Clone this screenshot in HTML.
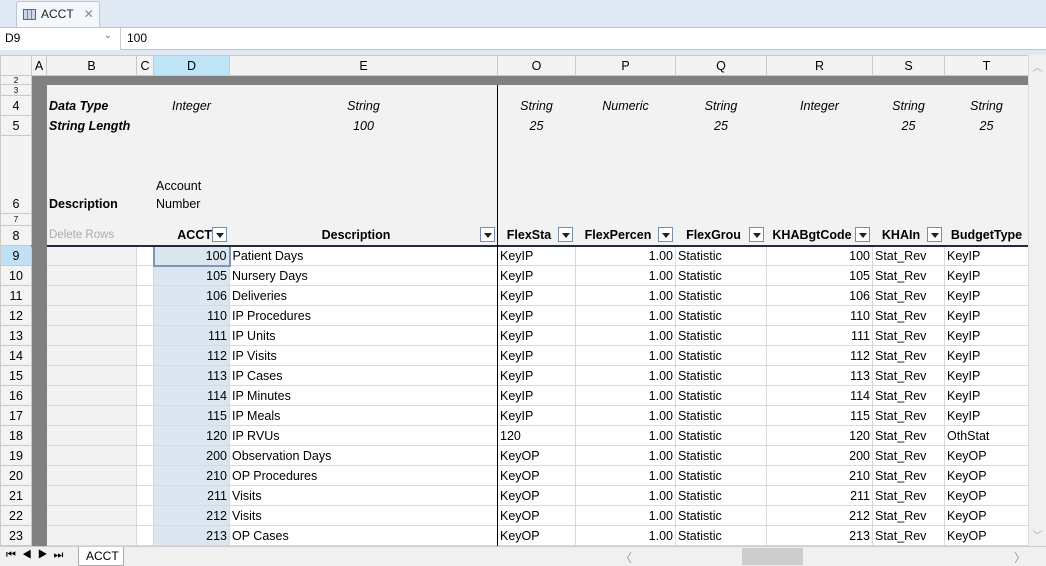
<!DOCTYPE html>
<html><head><meta charset="utf-8"><style>
*{box-sizing:border-box;margin:0;padding:0}
body{width:1046px;height:566px;overflow:hidden;background:#dfe8f3;font-family:"Liberation Sans",sans-serif;font-size:12.5px;color:#000;position:relative}
.tab{position:absolute;left:16px;top:1px;width:84px;height:26px;background:#f4f7fb;border:1px solid #b9c6d6;border-bottom:none;border-radius:3px 3px 0 0;font-size:12px;line-height:24px;padding-left:24px;color:#222}
.tab .ic{position:absolute;left:6px;top:7px;width:13px;height:11px;border:1px solid #4a6a9a;background:repeating-linear-gradient(90deg,#c8d6ea 0 3px,#6d88b3 3px 4px)}
.tab .x{color:#888;margin-left:10px}
.fb{position:absolute;left:0;top:27px;width:1046px;height:23px;background:#fff;border-top:1px solid #b9c6d6;border-bottom:1px solid #b9c6d6}
.nb{position:absolute;left:0;top:0;width:121px;height:22px;border-right:1px solid #ccc;background:#fff;padding:3px 5px;font-size:12px}
.nb span{position:absolute;right:8px;top:2px;color:#777;font-size:10px}
.fv{position:absolute;left:127px;top:3px;font-size:12px}
.grid{position:absolute;left:0;top:55px;width:1028px;height:491px;overflow:hidden;background:#fff}
table{border-collapse:collapse;table-layout:fixed;width:1028px}
td{overflow:hidden;white-space:nowrap;padding:0 2px;height:20px;border:1px solid #d9d9d9;line-height:18px}
.hd td{background:#f3f3f3;text-align:center;font-size:12.5px;border-color:#c9c9c9}
td.rh{background:#f3f3f3;text-align:center;border-color:#c9c9c9;font-size:12.5px}
tr.top td{background:#f2f2f2;border-color:#f2f2f2}
tr.top td.rh{border-color:#c9c9c9;background:#f3f3f3}
td.ga{background:#808080 !important;border-color:#808080 !important}
tr.band td{background:#808080;border-color:#808080}
tr.band td.rh{background:#f3f3f3;border-color:#c9c9c9}
tr.tiny td{height:0;font-size:8px;line-height:5px;padding-top:0;padding-bottom:0}
tr.tiny td.rh{height:auto}
.r{text-align:right}.c{text-align:center}.i{font-style:italic}.b{font-weight:bold}
td.B{background:#f2f2f2}
td.D{background:#dce6f1}
tr.r8 td{border-bottom:2px solid #1f2a3a}
tr.r8 td.rh{border-bottom:1px solid #c9c9c9}
.vl{position:absolute;left:497px;top:30px;width:1px;height:470px;background:#000}
.dd{display:inline-block;width:15px;height:15px;border:1px solid #7a8ca8;background:#fff;vertical-align:middle;position:relative;float:right;margin-top:1px}
.dd:after{content:"";position:absolute;left:3px;top:5px;border-left:4px solid transparent;border-right:4px solid transparent;border-top:5px solid #222}
.vs{position:absolute;left:1028px;top:55px;width:18px;height:491px;background:#f0f0f0;border-left:1px solid #ddd;color:#aaa;font-size:10px;text-align:center}
.bot{position:absolute;left:0;top:546px;width:1046px;height:20px;background:#f0f0f0;border-top:1px solid #ccc;font-size:12px}
</style></head><body>
<div class="tab"><div class="ic"></div>ACCT<span class="x">✕</span></div>
<div class="fb"><div class="nb">D9<span>⌄</span></div><div class="fv">100</div></div>
<div class="grid"><table>
<colgroup><col style="width:31px"><col style="width:15px"><col style="width:90px"><col style="width:17px"><col style="width:76px"><col style="width:268px"><col style="width:78px"><col style="width:100px"><col style="width:91px"><col style="width:106px"><col style="width:72px"><col style="width:84px"></colgroup>
<tr class="hd"><td></td><td>A</td><td>B</td><td>C</td><td style="background:#bfe3f7">D</td><td>E</td><td>O</td><td>P</td><td>Q</td><td>R</td><td>S</td><td>T</td></tr>
<tr class="band tiny" style="height:9px"><td class="rh" style="height:9px">2</td><td></td><td></td><td></td><td></td><td></td><td></td><td></td><td></td><td></td><td></td><td></td></tr>
<tr class="top tiny" style="height:11px"><td class="rh" style="height:11px">3</td><td class="ga"></td><td></td><td></td><td></td><td></td><td></td><td></td><td></td><td></td><td></td><td></td></tr>
<tr class="top"><td class="rh">4</td><td class="ga"></td><td class="b i" colspan="2">Data Type</td><td class="c i">Integer</td><td class="c i">String</td><td class="c i">String</td><td class="c i">Numeric</td><td class="c i">String</td><td class="c i">Integer</td><td class="c i">String</td><td class="c i">String</td></tr>
<tr class="top"><td class="rh">5</td><td class="ga"></td><td class="b i" colspan="2">String Length</td><td></td><td class="c i">100</td><td class="c i">25</td><td></td><td class="c i">25</td><td></td><td class="c i">25</td><td class="c i">25</td></tr>
<tr class="top"><td class="rh" style="height:78px;vertical-align:bottom">6</td><td class="ga"></td><td class="b" colspan="2" style="vertical-align:bottom">Description</td><td style="vertical-align:bottom;white-space:normal;line-height:18px">Account Number</td><td></td><td></td><td></td><td></td><td></td><td></td><td></td></tr>
<tr class="top tiny" style="height:12px"><td class="rh" style="height:12px">7</td><td class="ga"></td><td></td><td></td><td></td><td></td><td></td><td></td><td></td><td></td><td></td><td></td></tr>
<tr class="top r8"><td class="rh">8</td><td class="ga"></td><td style="color:#aaa;font-size:11.5px">Delete Rows</td><td></td><td class="b r">ACCT <span class="dd"></span></td><td class="b c">Description<span class="dd"></span></td><td class="b c">FlexSta<span class="dd"></span></td><td class="b c">FlexPercen<span class="dd"></span></td><td class="b c">FlexGrou<span class="dd"></span></td><td class="b c">KHABgtCode<span class="dd"></span></td><td class="b c">KHAIn<span class="dd"></span></td><td class="b c">BudgetType</td></tr>
<tr><td class="rh" style="background:#bfe0f5">9</td><td class="ga"></td><td class="B"></td><td></td><td class="D r" style="border:2px solid #7d96b8">100</td><td>Patient Days</td><td>KeyIP</td><td class="r">1.00</td><td>Statistic</td><td class="r">100</td><td>Stat_Rev</td><td>KeyIP</td></tr>
<tr><td class="rh">10</td><td class="ga"></td><td class="B"></td><td></td><td class="D r">105</td><td>Nursery Days</td><td>KeyIP</td><td class="r">1.00</td><td>Statistic</td><td class="r">105</td><td>Stat_Rev</td><td>KeyIP</td></tr>
<tr><td class="rh">11</td><td class="ga"></td><td class="B"></td><td></td><td class="D r">106</td><td>Deliveries</td><td>KeyIP</td><td class="r">1.00</td><td>Statistic</td><td class="r">106</td><td>Stat_Rev</td><td>KeyIP</td></tr>
<tr><td class="rh">12</td><td class="ga"></td><td class="B"></td><td></td><td class="D r">110</td><td>IP Procedures</td><td>KeyIP</td><td class="r">1.00</td><td>Statistic</td><td class="r">110</td><td>Stat_Rev</td><td>KeyIP</td></tr>
<tr><td class="rh">13</td><td class="ga"></td><td class="B"></td><td></td><td class="D r">111</td><td>IP Units</td><td>KeyIP</td><td class="r">1.00</td><td>Statistic</td><td class="r">111</td><td>Stat_Rev</td><td>KeyIP</td></tr>
<tr><td class="rh">14</td><td class="ga"></td><td class="B"></td><td></td><td class="D r">112</td><td>IP Visits</td><td>KeyIP</td><td class="r">1.00</td><td>Statistic</td><td class="r">112</td><td>Stat_Rev</td><td>KeyIP</td></tr>
<tr><td class="rh">15</td><td class="ga"></td><td class="B"></td><td></td><td class="D r">113</td><td>IP Cases</td><td>KeyIP</td><td class="r">1.00</td><td>Statistic</td><td class="r">113</td><td>Stat_Rev</td><td>KeyIP</td></tr>
<tr><td class="rh">16</td><td class="ga"></td><td class="B"></td><td></td><td class="D r">114</td><td>IP Minutes</td><td>KeyIP</td><td class="r">1.00</td><td>Statistic</td><td class="r">114</td><td>Stat_Rev</td><td>KeyIP</td></tr>
<tr><td class="rh">17</td><td class="ga"></td><td class="B"></td><td></td><td class="D r">115</td><td>IP Meals</td><td>KeyIP</td><td class="r">1.00</td><td>Statistic</td><td class="r">115</td><td>Stat_Rev</td><td>KeyIP</td></tr>
<tr><td class="rh">18</td><td class="ga"></td><td class="B"></td><td></td><td class="D r">120</td><td>IP RVUs</td><td>120</td><td class="r">1.00</td><td>Statistic</td><td class="r">120</td><td>Stat_Rev</td><td>OthStat</td></tr>
<tr><td class="rh">19</td><td class="ga"></td><td class="B"></td><td></td><td class="D r">200</td><td>Observation Days</td><td>KeyOP</td><td class="r">1.00</td><td>Statistic</td><td class="r">200</td><td>Stat_Rev</td><td>KeyOP</td></tr>
<tr><td class="rh">20</td><td class="ga"></td><td class="B"></td><td></td><td class="D r">210</td><td>OP Procedures</td><td>KeyOP</td><td class="r">1.00</td><td>Statistic</td><td class="r">210</td><td>Stat_Rev</td><td>KeyOP</td></tr>
<tr><td class="rh">21</td><td class="ga"></td><td class="B"></td><td></td><td class="D r">211</td><td>Visits</td><td>KeyOP</td><td class="r">1.00</td><td>Statistic</td><td class="r">211</td><td>Stat_Rev</td><td>KeyOP</td></tr>
<tr><td class="rh">22</td><td class="ga"></td><td class="B"></td><td></td><td class="D r">212</td><td>Visits</td><td>KeyOP</td><td class="r">1.00</td><td>Statistic</td><td class="r">212</td><td>Stat_Rev</td><td>KeyOP</td></tr>
<tr><td class="rh">23</td><td class="ga"></td><td class="B"></td><td></td><td class="D r">213</td><td>OP Cases</td><td>KeyOP</td><td class="r">1.00</td><td>Statistic</td><td class="r">213</td><td>Stat_Rev</td><td>KeyOP</td></tr>
<tr><td class="rh">24</td><td class="ga"></td><td class="B"></td><td></td><td class="D r"></td><td></td><td></td><td></td><td></td><td></td><td></td><td></td></tr>
</table><div class="vl"></div></div>
<div class="vs"><div style="margin-top:4px">︿</div><div style="position:absolute;bottom:4px;width:100%">﹀</div></div>
<div class="bot">
<span style="position:absolute;left:6px;top:2px;font-size:11px;letter-spacing:6px">⏮◀▶⏭</span>
<div style="position:absolute;left:78px;top:0;width:46px;height:19px;background:#fff;border:1px solid #aaa;border-top:none;padding-left:7px;line-height:18px">ACCT</div>
<span style="position:absolute;left:620px;top:2px;color:#999">〈</span>
<div style="position:absolute;left:742px;top:1px;width:61px;height:17px;background:#cdcdcd"></div>
<span style="position:absolute;left:1014px;top:2px;color:#999">〉</span>
</div>
</body></html>
